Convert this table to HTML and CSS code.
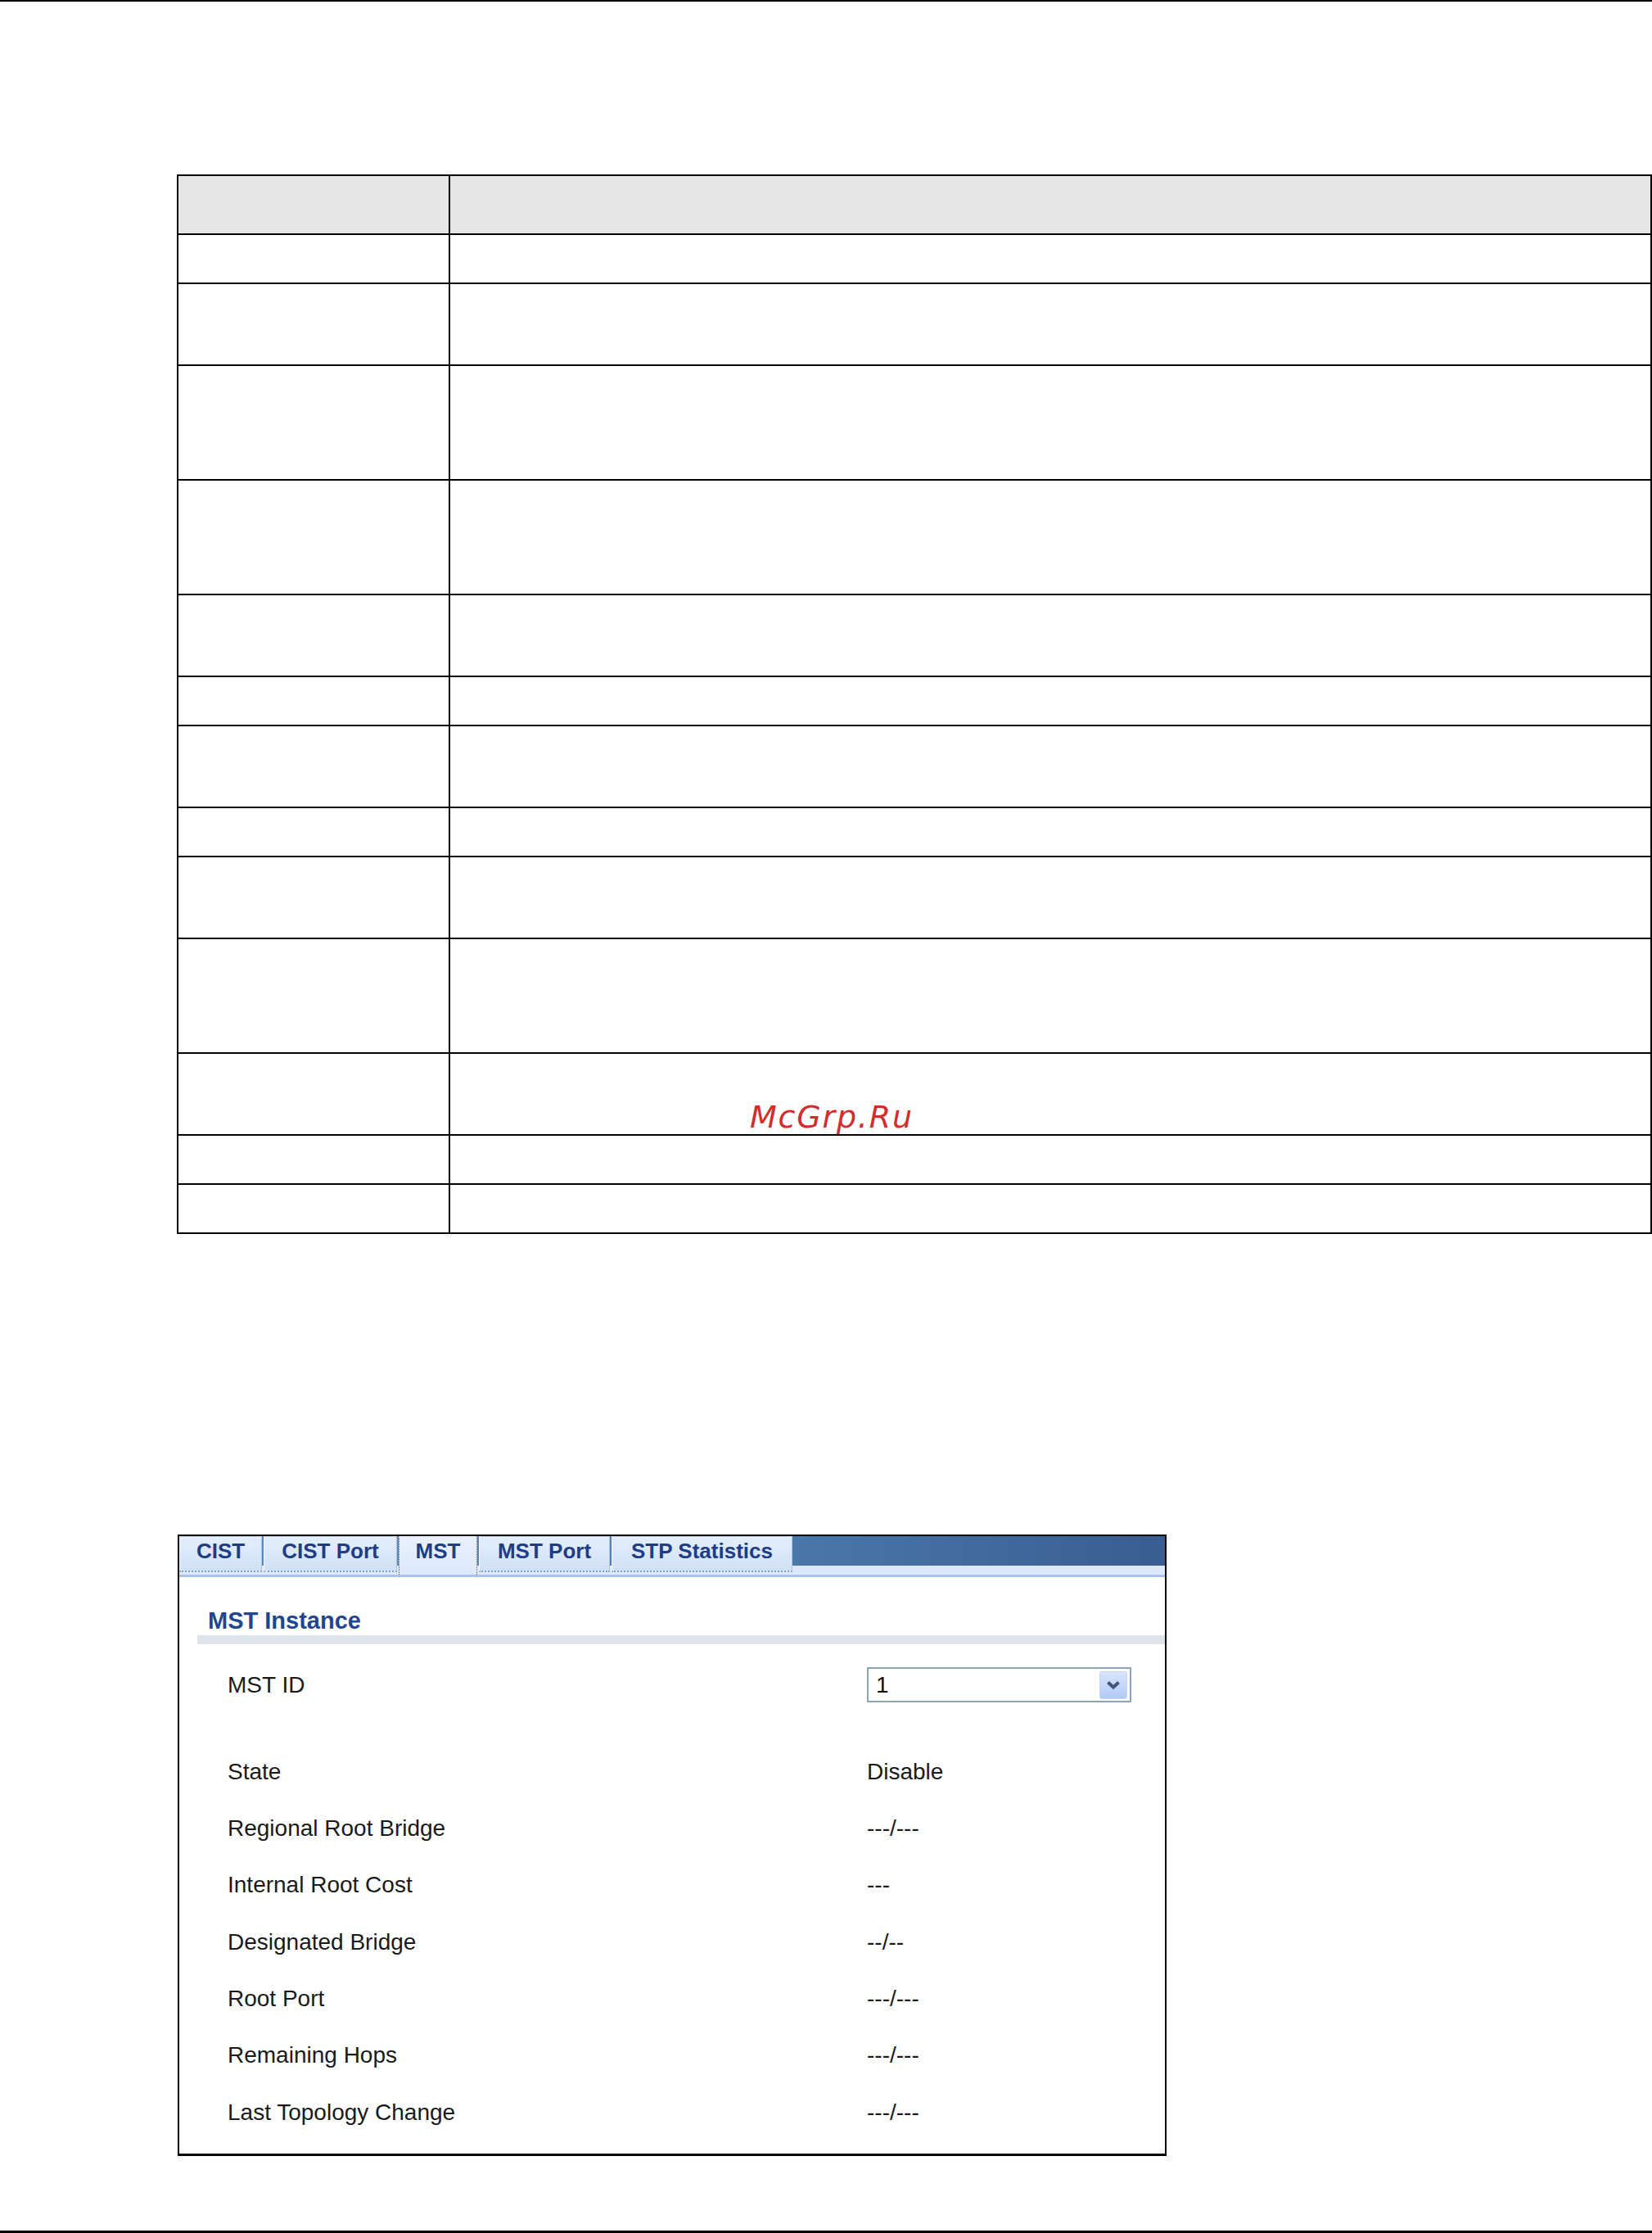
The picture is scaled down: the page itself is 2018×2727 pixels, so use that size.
FILE: index.html
```html
<!DOCTYPE html>
<html lang="en">
<head>
<meta charset="utf-8">
<title>MST Instance</title>
<link rel="stylesheet" href="styles.css">
</head>
<body>
<div class="page">
  <div class="rule rule-top"></div>

  <div class="spec">
    <div class="spec-row row-head"><div class="c1"></div><div class="c2"></div></div>
    <div class="spec-row row-1"><div class="c1"></div><div class="c2"></div></div>
    <div class="spec-row row-2"><div class="c1"></div><div class="c2"></div></div>
    <div class="spec-row row-3"><div class="c1"></div><div class="c2"></div></div>
    <div class="spec-row row-3"><div class="c1"></div><div class="c2"></div></div>
    <div class="spec-row row-2"><div class="c1"></div><div class="c2"></div></div>
    <div class="spec-row row-1"><div class="c1"></div><div class="c2"></div></div>
    <div class="spec-row row-2"><div class="c1"></div><div class="c2"></div></div>
    <div class="spec-row row-1"><div class="c1"></div><div class="c2"></div></div>
    <div class="spec-row row-2"><div class="c1"></div><div class="c2"></div></div>
    <div class="spec-row row-3"><div class="c1"></div><div class="c2"></div></div>
    <div class="spec-row row-2"><div class="c1"></div><div class="c2"></div></div>
    <div class="spec-row row-1"><div class="c1"></div><div class="c2"></div></div>
    <div class="spec-row row-1"><div class="c1"></div><div class="c2"></div></div>
  </div>

  <div class="watermark">McGrp.Ru</div>

  <div class="panel">
    <div class="tabbar">
      <div class="tab tab-cist">CIST</div>
      <div class="tab tab-cistport">CIST Port</div>
      <div class="tab tab-mst active">MST</div>
      <div class="tab tab-mstport">MST Port</div>
      <div class="tab tab-stats">STP Statistics</div>
    </div>
    <div class="panel-body">
      <div class="section-title">MST Instance</div>
      <div class="section-bar"></div>
      <div class="field field-id">
        <span class="label">MST ID</span>
        <div class="select">
          <span class="select-value">1</span>
          <span class="select-btn">
            <svg width="18" height="12" viewBox="0 0 18 12"><path d="M2.5 2.5 L9 8.5 L15.5 2.5" fill="none" stroke="#45587a" stroke-width="4.2" stroke-linejoin="miter"/></svg>
          </span>
        </div>
      </div>
      <div class="fields">
        <div class="field"><span class="label">State</span><span class="value">Disable</span></div>
        <div class="field"><span class="label">Regional Root Bridge</span><span class="value">---/---</span></div>
        <div class="field"><span class="label">Internal Root Cost</span><span class="value">---</span></div>
        <div class="field"><span class="label">Designated Bridge</span><span class="value">--/--</span></div>
        <div class="field"><span class="label">Root Port</span><span class="value">---/---</span></div>
        <div class="field"><span class="label">Remaining Hops</span><span class="value">---/---</span></div>
        <div class="field"><span class="label">Last Topology Change</span><span class="value">---/---</span></div>
      </div>
    </div>
  </div>

  <div class="rule rule-bottom"></div>
</div>
</body>
</html>
```

FILE: styles.css
```css
html, body {
  margin: 0;
  padding: 0;
  background: #fff;
}

.page {
  position: relative;
  width: 2018px;
  height: 2727px;
  display: flex;
  flex-direction: column;
  overflow: hidden;
  font-family: "Liberation Sans", Arial, sans-serif;
  color: #1a1a1a;
}

.rule {
  background: #000;
  width: 100%;
  flex: none;
}
.rule-top { height: 2px; }
.rule-bottom { height: 3px; margin-top: auto; }

/* ---------- spec table ---------- */
.spec {
  margin-top: 211px;
  margin-left: 216px;
  width: 1802px;
  box-sizing: border-box;
  border: 2px solid #000;
  flex: none;
}
.spec-row {
  display: grid;
  grid-template-columns: 330px 1fr;
}
.spec-row + .spec-row { border-top: 2px solid #000; }
.spec-row .c2 { border-left: 2px solid #000; }
.row-head { height: 70px; background: #e6e6e6; }
.row-1 { height: 58px; }
.row-2 { height: 98px; }
.row-3 { height: 138px; }

.watermark {
  position: absolute;
  left: 916px;
  top: 1345px;
  font-family: "DejaVu Sans", Verdana, sans-serif;
  font-style: oblique;
  font-size: 38px;
  line-height: 38px;
  letter-spacing: 1.8px;
  color: #d42b2b;
}

/* ---------- panel ---------- */
.panel {
  margin-top: 367px;
  margin-left: 217px;
  width: 1208px;
  height: 759px;
  box-sizing: border-box;
  border: 2px solid #000;
  border-bottom-width: 3px;
  flex: none;
  display: flex;
  flex-direction: column;
}

.tabbar {
  height: 47px;
  display: flex;
  gap: 2px;
  align-items: flex-start;
  background-color: #dde9fb;
  background-image: linear-gradient(to right, #5786b8 0%, #5c8abb 22%, #4a79ad 60%, #3a5d90 100%);
  background-size: 100% 36px;
  background-repeat: no-repeat;
  border-bottom: 3px solid #a8c3e9;
}

.tab {
  box-sizing: border-box;
  height: 44px;
  text-align: center;
  font-size: 26px;
  line-height: 34px;
  font-weight: bold;
  color: #1d3e86;
  background: linear-gradient(#e4eefc, #d1e0f6);
  border-top: 1px solid #c7d8f1;
  border-left: 1px solid #f5f9ff;
  border-right: 1px solid #b4c8e6;
  border-bottom: 2px dotted #7f9cca;
}
.tab-cist { width: 101px; }
.tab-cistport { width: 163px; }
.tab-mst { width: 96px; }
.tab-mstport { width: 160px; }
.tab-stats { width: 221px; }

.tab.active {
  height: 47px;
  background: linear-gradient(#e8f0fc, #dde9fb);
  border-top: 1px solid #e8f0fc;
  border-left: 1px dotted #6d5a3b;
  border-right: 1px dotted #6d5a3b;
  border-bottom: none;
}

.panel-body {
  display: flex;
  flex-direction: column;
}

.section-title {
  margin-top: 36px;
  padding-left: 35px;
  font-size: 29px;
  line-height: 34px;
  font-weight: bold;
  color: #1f4690;
}

.section-bar {
  margin-top: 1px;
  margin-left: 22px;
  height: 11px;
  background: #dfe4ec;
}

.field {
  display: grid;
  grid-template-columns: 840px 1fr;
  align-items: center;
  height: 69.33px;
  font-size: 28px;
  line-height: 32px;
}
.label { padding-left: 59px; }

.field-id {
  margin-top: 28px;
  height: 43px;
}

.select {
  box-sizing: border-box;
  width: 323px;
  height: 43px;
  border: 2px solid #8ea3bc;
  background: #fff;
  display: flex;
  align-items: center;
  justify-content: space-between;
  padding-left: 9px;
  padding-right: 3px;
}
.select-value { font-size: 28px; color: #111; }
.select-btn {
  box-sizing: border-box;
  width: 34px;
  height: 34px;
  border-radius: 3px;
  border: 1px solid #c6d6f3;
  background: linear-gradient(#d8e5fc, #b3caf6);
  display: flex;
  align-items: center;
  justify-content: center;
}

.fields {
  margin-top: 50px;
  display: flex;
  flex-direction: column;
}
```
